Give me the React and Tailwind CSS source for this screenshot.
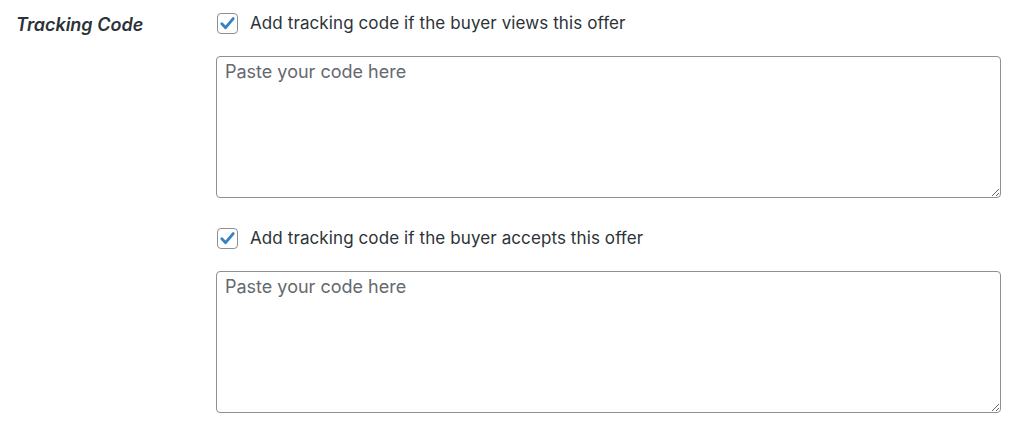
const CheckBox = () => (
  <span className="flex h-[21px] w-[21px] shrink-0 items-center justify-center rounded-[4px] border border-[#8c8f94] bg-white">
    <svg viewBox="0 0 20 20" className="h-[19px] w-[19px]">
      <path d="M4 10.3 L8 14.4 L16 4.8" fill="none" stroke="#3582c4" strokeWidth="3" strokeLinecap="round" strokeLinejoin="round" />
    </svg>
  </span>
);

const CodeBox = () => (
  <textarea
    placeholder="Paste your code here"
    className="block h-[142px] w-[785px] resize-y rounded-[4px] border border-[#8c8f94] bg-white px-[8px] pt-[3px] pb-[5px] text-[18px] leading-[24px] text-[#2c3338] placeholder-[#646970] focus:outline-none"
  />
);

const Option = ({ label }) => (
  <div className="flex flex-col">
    <label className="flex items-center gap-[12px] pl-[1px]">
      <CheckBox />
      <span className="text-[17px] leading-[22px] tracking-[0.1px] text-[#2c3338]">{label}</span>
    </label>
    <div className="mt-[22px]">
      <CodeBox />
    </div>
  </div>
);

export default function App() {
  return (
    <div className="min-h-[433px] bg-white font-['Inter',sans-serif]">
      <div className="flex pt-[12px]">
        <div className="w-[216px] shrink-0 pl-[16px] pt-[1px]">
          <span className="text-[18px] font-semibold italic leading-[20px] text-[#2c3338]">Tracking Code</span>
        </div>
        <div className="flex flex-col gap-[29px]">
          <Option label="Add tracking code if the buyer views this offer" />
          <Option label="Add tracking code if the buyer accepts this offer" />
        </div>
      </div>
    </div>
  );
}
